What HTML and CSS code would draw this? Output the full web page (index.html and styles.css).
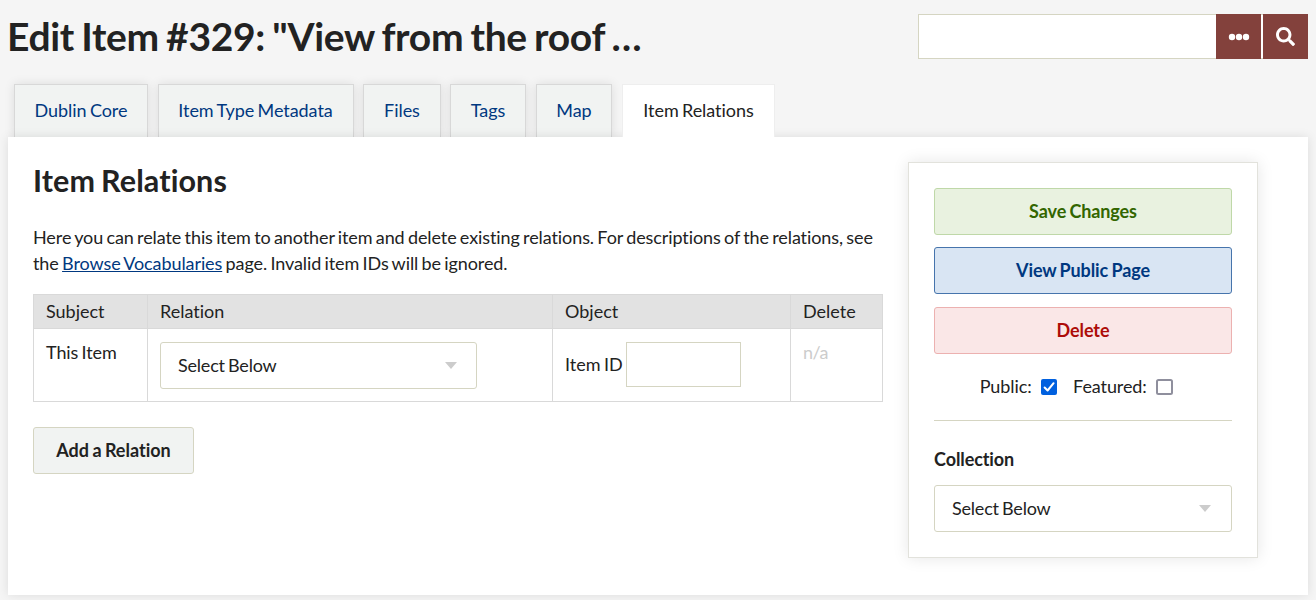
FILE: index.html
```html
<!DOCTYPE html>
<html lang="en">
<head>
<meta charset="utf-8">
<title>Edit Item #329</title>
<link rel="stylesheet" href="styles.css">
</head>
<body>
<header class="topbar">
  <h1 class="page-title">Edit Item #329: "View from the roof …</h1>
  <form class="search">
    <input class="search-input" type="text" aria-label="Search">
    <button class="search-btn" type="button" aria-label="Options"><svg width="22" height="8" viewBox="0 0 22 8"><circle cx="4" cy="4" r="3.2"/><circle cx="11" cy="4" r="3.2"/><circle cx="18" cy="4" r="3.2"/></svg></button>
    <button class="search-btn" type="button" aria-label="Search"><svg width="19" height="19" viewBox="0 0 512 512"><path d="M505 442.700L405.300 343c-4.500-4.500-10.600-7-17-7H372c27.600-35.300 44-79.700 44-128C416 93.100 322.900 0 208 0S0 93.100 0 208s93.100 208 208 208c48.300 0 92.700-16.400 128-44v16.300c0 6.400 2.500 12.500 7 17l99.700 99.700c9.400 9.400 24.600 9.400 33.900 0l28.300-28.300c9.400-9.400 9.400-24.600.1-34zM208 336c-70.700 0-128-57.200-128-128 0-70.700 57.200-128 128-128 70.700 0 128 57.200 128 128 0 70.700-57.200 128-128 128z"/></svg></button>
  </form>
</header>
<nav class="tabs">
  <a class="tab tab-core">Dublin Core</a>
  <a class="tab tab-meta">Item Type Metadata</a>
  <a class="tab tab-files">Files</a>
  <a class="tab tab-tags">Tags</a>
  <a class="tab tab-map">Map</a>
  <a class="tab tab-active">Item Relations</a>
</nav>
<main class="content">
  <section class="main-col">
    <h2 class="section-title">Item Relations</h2>
    <p class="intro">Here you can relate this item to another item and delete existing relations. For descriptions of the relations, see<br>the <a class="link">Browse Vocabularies</a> page. Invalid item IDs will be ignored.</p>
    <table class="relations">
      <colgroup><col class="c1"><col class="c2"><col class="c3"><col class="c4"></colgroup>
      <thead><tr><th>Subject</th><th>Relation</th><th>Object</th><th>Delete</th></tr></thead>
      <tbody><tr>
        <td>This Item</td>
        <td><div class="select select-relation"><span>Select Below</span><i class="caret"></i></div></td>
        <td><label class="item-id"><span>Item ID</span><input class="id-input" type="text"></label></td>
        <td class="muted">n/a</td>
      </tr></tbody>
    </table>
    <button class="btn btn-add" type="button">Add a Relation</button>
  </section>
  <aside class="save-panel">
    <button class="btn btn-save" type="button">Save Changes</button>
    <button class="btn btn-view" type="button">View Public Page</button>
    <button class="btn btn-delete" type="button">Delete</button>
    <div class="flags">
      <span class="flag"><span class="flag-text">Public:</span><svg width="16" height="16" viewBox="0 0 16 16"><rect width="16" height="16" rx="2" fill="#0060df"/><path d="M3.600 8.500l3 3 6-7.300" fill="none" stroke="#fff" stroke-width="2" stroke-linecap="round" stroke-linejoin="round"/></svg></span>
      <span class="flag"><span class="flag-text">Featured:</span><svg width="17" height="16" viewBox="0 0 17 16"><rect x="1" y="1" width="15" height="14" rx="1.500" fill="#fff" stroke="#8f8f9d" stroke-width="2"/></svg></span>
    </div>
    <div class="collection">
      <span class="collection-label">Collection</span>
      <div class="select"><span>Select Below</span><i class="caret"></i></div>
    </div>
  </aside>
</main>
</body>
</html>
```
FILE: styles.css
```css
* { box-sizing: border-box; }
body {
  margin: 0;
  padding: 14px 8px 0;
  height: 600px;
  overflow: hidden;
  background: #f5f5f5;
  color: #222;
  font: 18px/26px Lato, sans-serif;
  font-variant-ligatures: none;
  letter-spacing: -.09px;
  word-spacing: -1.200px;
}
.topbar { display: flex; justify-content: space-between; height: 70px; }
.page-title { margin: 0 0 0 -1px; font-size: 39px; line-height: 45px; font-weight: 700; letter-spacing: -.3px; word-spacing: -2px; white-space: nowrap; }
.search { display: flex; gap: 2px; width: 390px; height: 45px; background: #fff; border: solid #d5d5c2; border-width: 1px 0 1px 1px; }
.search-input { flex: 1; min-width: 0; border: 0; background: #fff; margin-right: -2px; }
.search-btn { display: flex; align-items: center; justify-content: center; width: 45px; height: 45px; margin-top: -1px; padding: 0; border: 0; background: #83413c; fill: #fff; }
.tabs { display: flex; height: 53px; padding-left: 6px; }
.tab {
  height: 53px;
  margin-right: 9.500px;
  border: 1px solid #d8d8d8;
  border-bottom: 0;
  background: #f1f3f2;
  box-shadow: 0 0 10px rgba(0, 0, 0, .1);
  color: #003880;
  line-height: 50px;
  letter-spacing: -.05px;
  text-align: center;
  white-space: nowrap;
}
.tab-core { width: 134px; }
.tab-meta { width: 196px; }
.tab-files { width: 78px; margin-right: 9px; }
.tab-tags { width: 76px; margin-right: 10px; }
.tab-map { width: 76px; margin-right: 10px; }
.tab-active { width: 153px; position: relative; z-index: 2; background: #fff; border-color: #eee; box-shadow: none; color: #222; }
.content {
  position: relative;
  display: flex;
  gap: 25px;
  align-items: flex-start;
  height: 458px;
  padding: 25px 50px 0 25px;
  background: #fff;
  box-shadow: 0 0 10px rgba(0, 0, 0, .1);
}
.main-col { width: 850px; }
.section-title { margin: 0 0 26px; font-size: 30.500px; line-height: 36px; font-weight: 700; letter-spacing: .1px; word-spacing: -1.500px; }
.intro { margin: 0 0 18px; white-space: nowrap; }
.link { color: #003880; text-decoration: underline; }
.relations { width: 850px; table-layout: fixed; border-collapse: collapse; margin-bottom: 25px; }
.c1 { width: 114px; }
.c2 { width: 405px; }
.c3 { width: 238px; }
.c4 { width: 92px; }
.relations th, .relations td { border: 1px solid #d9d9d9; text-align: left; vertical-align: top; }
.relations th { height: 34px; padding: 3px 12px 4px; background: #e2e2e2; font-weight: 400; letter-spacing: 0; }
.relations td { height: 73px; padding: 10px 12px 12px; }
.select { display: flex; align-items: center; justify-content: space-between; height: 47px; padding: 0 20px 0 17px; border: 1px solid #d5d5c2; border-radius: 3px; background: #fff; }
.select span { padding-bottom: 2px; letter-spacing: -.2px; }
.select-relation { width: 317px; margin-top: 3px; padding-right: 19px; }
.caret { width: 0; height: 0; border: solid transparent; border-width: 7px 6.500px 0; border-top-color: #ccc; }
.item-id { display: flex; align-items: center; justify-content: space-between; width: 176px; margin-top: 3px; }
.item-id span { padding-bottom: 2px; letter-spacing: 0; }
.id-input { width: 115px; height: 45px; border: 1px solid #d5d5c2; background: #fff; }
.relations .muted { color: #ccc; letter-spacing: -.5px; }
.btn { display: block; height: 47px; padding: 0 0 1px; border: 1px solid #d5d5c2; border-radius: 3px; font: 700 18px/44px Lato, sans-serif; font-variant-ligatures: none; letter-spacing: -.1px; word-spacing: -1px; text-align: center; }
.btn-add { width: 161px; background: #f1f3f2; color: #222; letter-spacing: 0; }
.save-panel { width: 350px; height: 396px; padding: 25px; border: 1px solid #e2e2dc; background: #fff; box-shadow: 0 0 15px rgba(0, 0, 0, .1); }
.save-panel .btn { width: 298px; margin-bottom: 12px; }
.save-panel .btn-save { background: #e9f2e0; border-color: #bfd8a8; color: #360; }
.save-panel .btn-view { background: #d9e5f3; border-color: #4674ac; color: #003880; margin-bottom: 13px; }
.save-panel .btn-delete { background: #fae7e7; border-color: #ecb1b0; color: #ad0c08; margin-bottom: 0; }
.flags { display: flex; justify-content: center; gap: 16px; height: 67px; padding-top: 20px; padding-right: 13px; border-bottom: 1px solid #d5d5c2; }
.flag { display: flex; align-items: center; height: 26px; gap: 9.500px; }
.flag-text { padding-bottom: 2px; }
.collection { padding-top: 25px; }
.collection-label { display: block; margin-bottom: 13px; font-weight: 700; }
```
